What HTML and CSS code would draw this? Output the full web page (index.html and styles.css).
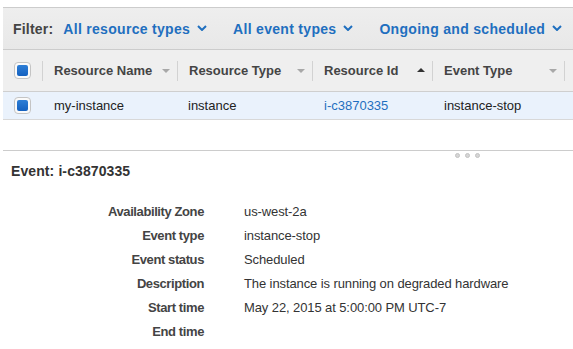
FILE: index.html
```html
<!DOCTYPE html>
<html>
<head>
<meta charset="utf-8">
<link rel="stylesheet" href="styles.css">
</head>
<body>
<div class="page">
  <div class="filter-bar">
    <span class="filter-label">Filter:</span>
    <span class="filter-item">All resource types <svg class="chev" viewBox="0 0 10 6" width="10" height="6"><path d="M1 1 L5 5 L9 1" fill="none" stroke="#1f6fbf" stroke-width="2"/></svg></span>
    <span class="filter-item">All event types <svg class="chev" viewBox="0 0 10 6" width="10" height="6"><path d="M1 1 L5 5 L9 1" fill="none" stroke="#1f6fbf" stroke-width="2"/></svg></span>
    <span class="filter-item">Ongoing and scheduled <svg class="chev" viewBox="0 0 10 6" width="10" height="6"><path d="M1 1 L5 5 L9 1" fill="none" stroke="#1f6fbf" stroke-width="2"/></svg></span>
  </div>
  <div class="grid head">
    <div class="cell check"><span class="cb"><span class="cb-in"></span></span></div>
    <div class="cell hcol">Resource Name <span class="arr down"></span></div>
    <div class="cell hcol">Resource Type <span class="arr down"></span></div>
    <div class="cell hcol">Resource Id <span class="arr up"></span></div>
    <div class="cell hcol">Event Type <span class="arr down"></span></div>
    <div class="cell rest"></div>
  </div>
  <div class="grid row">
    <div class="cell check"><span class="cb"><span class="cb-in"></span></span></div>
    <div class="cell">my-instance</div>
    <div class="cell">instance</div>
    <div class="cell link">i-c3870335</div>
    <div class="cell">instance-stop</div>
    <div class="cell rest"></div>
  </div>
  <div class="gap"></div>
  <div class="divider">
    <div class="handle"><span></span><span></span><span></span></div>
  </div>
  <h2 class="event-title">Event: i-c3870335</h2>
  <dl class="details">
    <dt>Availability Zone</dt><dd>us-west-2a</dd>
    <dt>Event type</dt><dd>instance-stop</dd>
    <dt>Event status</dt><dd>Scheduled</dd>
    <dt>Description</dt><dd>The instance is running on degraded hardware</dd>
    <dt>Start time</dt><dd>May 22, 2015 at 5:00:00 PM UTC-7</dd>
    <dt>End time</dt><dd></dd>
  </dl>
</div>
</body>
</html>
```

FILE: styles.css
```css
html, body {
  margin: 0;
  padding: 0;
  background: #ffffff;
  font-family: "Liberation Sans", Arial, sans-serif;
  color: #333333;
  overflow: hidden;
}
.page {
  padding: 7px 0 0 3px;
  width: 580px;
}
.filter-bar {
  height: 41px;
  border-top: 1px solid #cccccc;
  border-bottom: 1px solid #cccccc;
  background: linear-gradient(#eeeeee, #e8e8e8);
  display: flex;
  align-items: center;
  white-space: nowrap;
  font-size: 14px;
  font-weight: bold;
}
.filter-label {
  color: #444444;
  margin-left: 10px;
  margin-right: 10px;
  letter-spacing: 0.2px;
}
.filter-item {
  color: #1f6fbf;
  margin-right: 26px;
  display: inline-flex;
  align-items: center;
  gap: 7px;
  letter-spacing: 0.3px;
}
.chev { display: block; margin-top: -1px; }
.grid {
  display: grid;
  grid-template-columns: 40px 135px 135px 120px 132px 1fr;
  white-space: nowrap;
}
.head {
  height: 41px;
  background: #efefef;
  border-bottom: 1px solid #cfcfcf;
  font-weight: bold;
  font-size: 13px;
  color: #444444;
}
.row {
  height: 27px;
  background: #eaf2fc;
  border-bottom: 1px solid #d8d8d8;
  font-size: 13px;
  color: #222222;
}
.cell {
  display: flex;
  align-items: center;
  padding-left: 11px;
  position: relative;
}
.row .cell:nth-child(3) { padding-left: 10px; }
.hcol::after,
.head .check::after {
  content: "";
  position: absolute;
  right: 0;
  top: 11px;
  height: 20px;
  width: 1px;
  background: #d2d2d2;
}
.rest { padding: 0; }
.arr {
  position: absolute;
  right: 8px;
  top: 19px;
  width: 0;
  height: 0;
  border-left: 4px solid transparent;
  border-right: 4px solid transparent;
}
.arr.down { border-top: 4px solid #a8a8a8; }
.arr.up { border-bottom: 4px solid #333333; top: 18px; }
.cb {
  width: 15px;
  height: 15px;
  border: 1px solid #c4c4c4;
  border-radius: 4px;
  background: #fafafa;
  display: flex;
  align-items: center;
  justify-content: center;
}
.cb-in {
  width: 11px;
  height: 11px;
  border-radius: 2px;
  background: linear-gradient(#2d7ed6, #1461c0);
}
.link { color: #1f6fbf; }
.gap { height: 30px; }
.divider {
  border-top: 1px solid #cccccc;
  position: relative;
  height: 0;
}
.handle {
  position: absolute;
  left: 452px;
  top: 2px;
  display: flex;
  gap: 5px;
}
.handle span {
  width: 5px;
  height: 5px;
  box-sizing: border-box;
  border-radius: 50%;
  background: #d6d6d6;
  border: 1px solid #c2c2c2;
}
.event-title {
  margin: 12px 0 0 8px;
  font-size: 14px;
  font-weight: bold;
  color: #333333;
  letter-spacing: 0.1px;
  line-height: 16px;
}
.details {
  display: grid;
  grid-template-columns: 201px 1fr;
  column-gap: 40px;
  row-gap: 0;
  margin: 21px 0 0 0;
  font-size: 13px;
  line-height: 24px;
}
.details dt {
  text-align: right;
  font-weight: bold;
  color: #444444;
  letter-spacing: -0.4px;
}
.details dd {
  margin: 0;
  color: #333333;
  min-height: 24px;
  letter-spacing: -0.1px;
}
```
